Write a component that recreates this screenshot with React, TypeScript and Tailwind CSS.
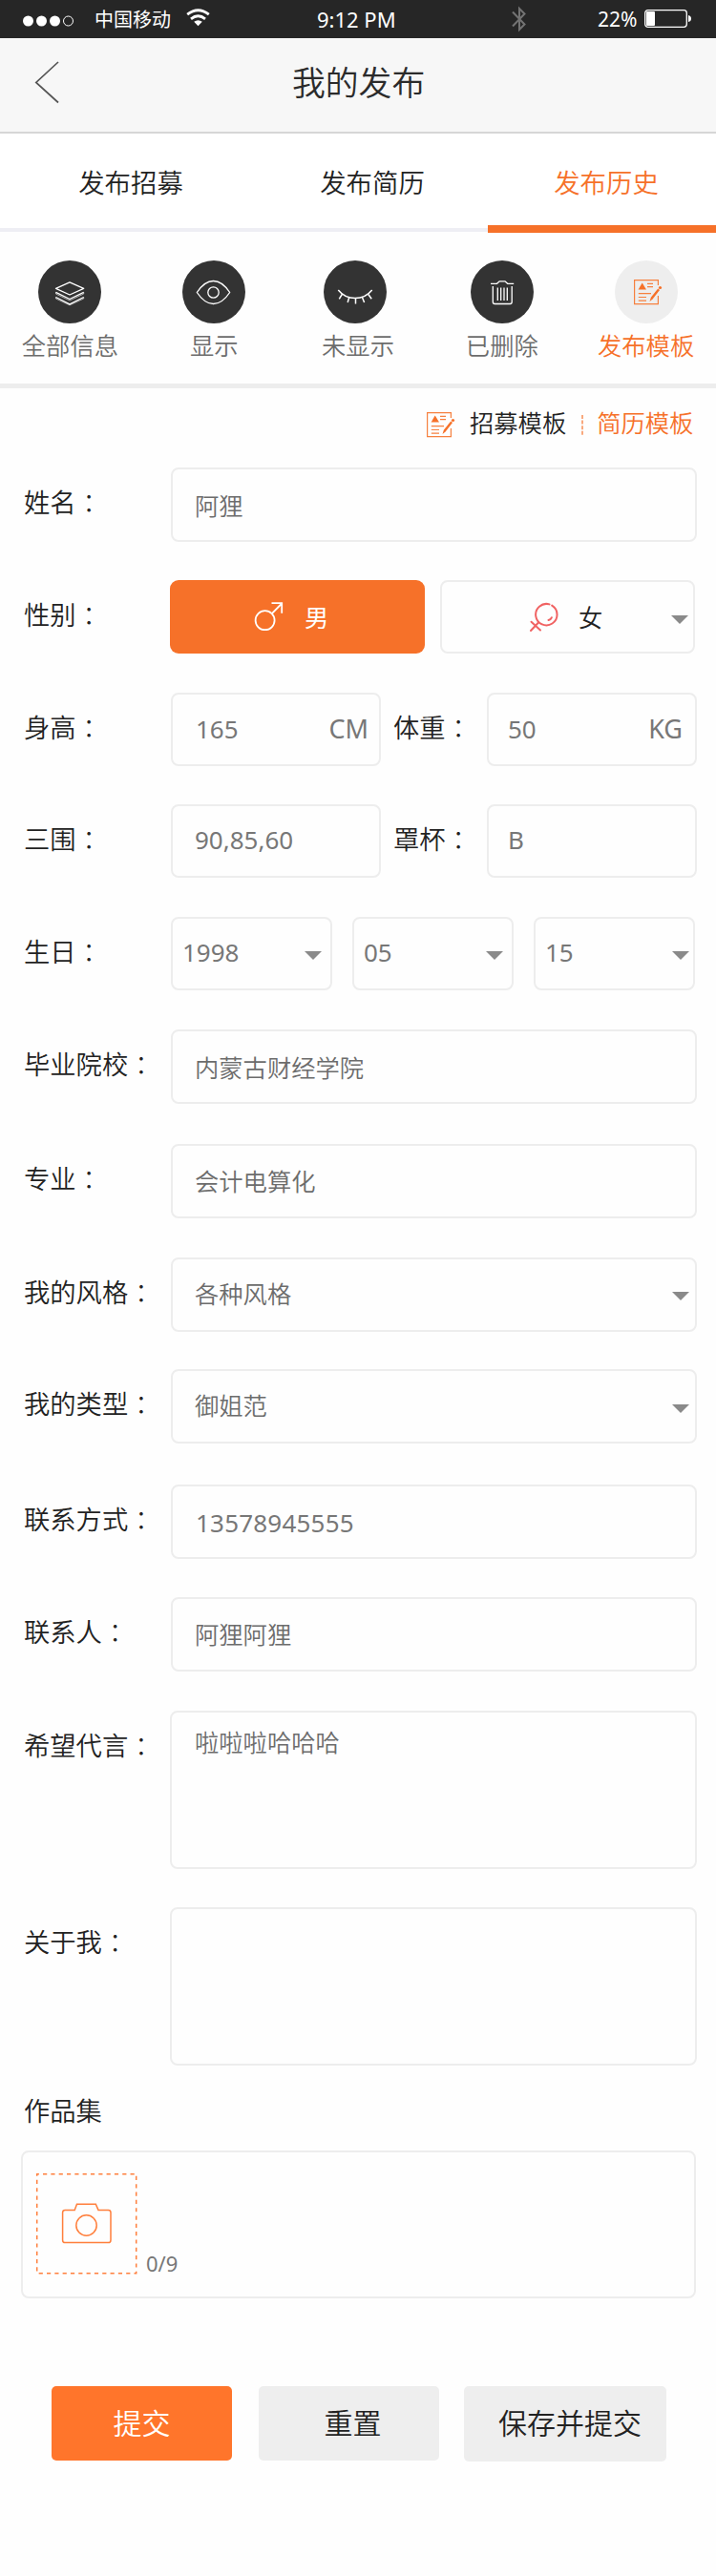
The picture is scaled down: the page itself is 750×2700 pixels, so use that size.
import type { ReactNode } from "react";

const CJK = "font-['Noto_Sans_CJK_SC',sans-serif]";
const LATIN = "font-['Noto_Sans','Noto_Sans_CJK_SC',sans-serif]";

function StatusBar() {
  return (
    <div className="flex h-10 items-center bg-[#262626] text-white">
      <svg className="ml-6 mt-1" width="54" height="12" viewBox="0 0 54 12">
        <circle cx="5.5" cy="6" r="5.5" fill="white" />
        <circle cx="19.5" cy="6" r="5.5" fill="white" />
        <circle cx="33.5" cy="6" r="5.5" fill="white" />
        <circle cx="47.5" cy="6" r="5" fill="none" stroke="white" />
      </svg>
      <span className={`ml-[21px] w-[80px] whitespace-nowrap text-[20px] leading-10 ${CJK}`}>中国移动</span>
      <svg className="ml-[16px] -mt-1" width="25" height="19" viewBox="0 0 25 19" fill="none" stroke="white" strokeWidth="2.8">
        <path d="M1.2 6.2Q12.5-2.8 23.8 6.2" />
        <path d="M5 10.8Q12.5 4.8 20 10.8" />
        <path d="M12.5 18.2L8.2 13.8Q12.5 10.6 16.8 13.8Z" fill="white" stroke="none" />
      </svg>
      <span className={`ml-[112px] w-[84px] whitespace-nowrap text-[22px] leading-10 ${LATIN}`}>9:12 PM</span>
      <svg className="ml-[120px]" width="16" height="28" viewBox="0 0 16 28" fill="none" stroke="#737373" strokeWidth="2">
        <path d="M1 6.5L13.5 19.5L8 25V3L13.5 8.5L1 21.5" />
      </svg>
      <span className={`ml-[74px] w-[44px] whitespace-nowrap text-[21px] leading-10 ${LATIN}`}>22%</span>
      <svg className="ml-[5px]" width="50" height="20" viewBox="0 0 50 20">
        <rect x="0.7" y="0.7" width="43.6" height="17.6" rx="3" fill="none" stroke="white" strokeWidth="1.3" />
        <rect x="2" y="2" width="9" height="15" rx="1" fill="white" />
        <path d="M46 6Q49 6.500 49 9.500Q49 12.500 46 13Z" fill="white" />
      </svg>
    </div>
  );
}

function LayersIcon() {
  return (
    <svg width="66" height="66" viewBox="41 273 66 66" fill="none" stroke="white" strokeWidth="1.3" strokeLinejoin="round">
      <path d="M59.500 302.300L74 295.800L88.700 302.300L74 309Z" />
      <path d="M59.500 306.300L74 313.500L88.700 306.300" />
      <path d="M59.500 306.300V308L74 315L88.700 308V306.300" strokeWidth="0.6" />
      <path d="M59.500 311.500L74 318.800L88.700 311.500" />
      <path d="M59.500 311.500V313L74 319.800L88.700 313V311.500" strokeWidth="0.6" />
    </svg>
  );
}

function EyeIcon() {
  return (
    <svg width="66" height="66" viewBox="191.500 273 66 66" fill="none" stroke="white" strokeWidth="1.300">
      <path d="M206.800 306.500C212.500 298 217.500 294.500 224 294.500S235.500 298 241.200 306.500C235.500 315 230.500 318.500 224 318.500S212.500 315 206.800 306.500Z" />
      <circle cx="224" cy="306.500" r="5.700" />
    </svg>
  );
}

function ClosedEyeIcon() {
  return (
    <svg width="66" height="66" viewBox="340 273 66 66" fill="none" stroke="white" strokeWidth="1.500">
      <path d="M355.300 304C360 309.800 366 312.600 373 312.600S386 309.800 390.700 304" />
      <path d="M359.600 308L356.300 313.300M366.800 311.300L365.200 317M373.500 312.600V318.500M380.400 311.500L382.600 317M386.800 308.500L390.200 313.300" />
    </svg>
  );
}

function TrashIcon() {
  return (
    <svg width="66" height="66" viewBox="491 273 66 66" fill="none" stroke="white" strokeWidth="1.300">
      <path d="M512 297.300H518.500L521.200 294.800H527L529.700 297.300H536.200" />
      <path d="M514.300 300V316.500Q514.300 318.500 516.300 318.500H532.200Q534.200 318.500 534.200 316.500V300" />
      <path d="M519.300 301.500V315M522.700 301.500V315M526 301.500V315M529.300 301.500V315" />
    </svg>
  );
}

function TemplateGlyph({ className }: { className?: string }) {
  return (
    <svg className={className} width="32" height="28" viewBox="663 292 32 28" fill="none" stroke="#f6803f" strokeWidth="1.200">
      <path d="M689.400 299V293.600H664.600V318.600H689.400V310" />
      <path d="M668.600 303.500L672.700 296.500L677 303.500Z" fill="#f67129" stroke="none" />
      <path d="M678 297.300H684M678 300.600H684M668.800 307.700H682M668.800 311.500H677M668.800 315.200H677" />
      <path d="M680.500 316L681.800 311.800L689.200 302.600L691 304L683.600 313.400Z" fill="#f67129" stroke="none" />
      <circle cx="691.500" cy="301.500" r="1.600" fill="#f67129" stroke="none" />
    </svg>
  );
}

function CategoryItem({ label, active, shift, children }: { label: string; active?: boolean; shift?: boolean; children: ReactNode }) {
  return (
    <div className="flex flex-col items-center">
      <div className={`flex size-[66px] items-center justify-center rounded-full ${active ? "bg-[#eeeeee]" : "bg-[#333333]"} ${shift ? "mr-[5px]" : ""}`}>
        {children}
      </div>
      <span className={`mt-[6px] whitespace-nowrap text-[25.3px] leading-[32px] font-[350] ${active ? "text-[#f67129]" : "text-[#6c6c6c]"} ${CJK}`}>{label}</span>
    </div>
  );
}

function Caret({ className }: { className?: string }) {
  return (
    <svg className={`shrink-0 ${className ?? ""}`} width="18" height="9" viewBox="0 0 18 9">
      <path d="M0 0H18L9 9Z" fill="#8a8a8a" />
    </svg>
  );
}

function Label({ text, colon = true, className = "w-[154px]" }: { text: string; colon?: boolean; className?: string }) {
  return (
    <div className={`h-[74px] shrink-0 whitespace-nowrap text-[27.3px] leading-[71px] font-[350] text-[#222222] ${CJK}`}>
      <div className={className}>
        {text}
        {colon && <span className="align-[-1px] font-['Noto_Sans_CJK_TC',sans-serif] leading-none font-light" lang="zh-TW">：</span>}
      </div>
    </div>
  );
}

function Box({ className, children }: { className: string; children?: ReactNode }) {
  return <div className={`flex shrink-0 items-start rounded-[8px] border-2 border-[#ededed] text-[#777777] ${className}`}>{children}</div>;
}

function Cn({ children, className = "ml-[23px] mt-[18px]" }: { children: ReactNode; className?: string }) {
  return <span className={`text-[25.3px] leading-[38px] font-[350] text-[#6c6c6c] ${CJK} ${className}`}>{children}</span>;
}

function Num({ children, className = "ml-[23px] mt-[17px] text-[26px]" }: { children: ReactNode; className?: string }) {
  return <span className={`leading-[38px] ${LATIN} ${className}`}>{children}</span>;
}

function Row({ label, className, children }: { label: string; className: string; children: ReactNode }) {
  return (
    <div className={`flex items-start pl-[25px] ${className}`}>
      <Label text={label} />
      {children}
    </div>
  );
}

export default function App() {
  return (
    <div className="flex h-[2700px] w-[750px] flex-col overflow-hidden bg-[#fefefe]">
      <StatusBar />

      <header className="flex h-[100px] border-b-2 border-[#d6d6d6] bg-[#f7f7f7]">
        <svg className="ml-9 mt-6 shrink-0" width="27" height="45" viewBox="36 64 27 45" fill="none" stroke="#555555" strokeWidth="1.700">
          <path d="M61 65L37.800 86.500L61 107.500" />
        </svg>
        <h1 className={`ml-[243px] whitespace-nowrap text-[34.800px] leading-[90px] font-[350] text-[#2b2b2b] ${CJK}`}>我的发布</h1>
      </header>

      <nav className={`flex h-[104px] bg-white text-[27.400px] leading-[100px] font-[350] text-[#222222] ${CJK}`}>
        <div className="h-[103px] w-[274px] border-b-4 border-[#eeeef4] text-center">发布招募</div>
        <div className="h-[103px] w-[237px] border-b-4 border-[#eeeef4] pr-[5px] text-center">发布简历</div>
        <div className="h-[104px] w-[239px] border-b-8 border-[#f67129] pl-[9px] text-center text-[#f67129]">发布历史</div>
      </nav>

      <div className="-mx-0.5 grid h-[163px] grid-cols-5 border-b-[5px] border-[#ededed] pt-[29px]">
        <CategoryItem label="全部信息"><LayersIcon /></CategoryItem>
        <CategoryItem label="显示"><EyeIcon /></CategoryItem>
        <CategoryItem label="未显示" shift><ClosedEyeIcon /></CategoryItem>
        <CategoryItem label="已删除"><TrashIcon /></CategoryItem>
        <CategoryItem label="发布模板" active><TemplateGlyph className="ml-1" /></CategoryItem>
      </div>

      <div className={`flex h-[83px] items-start pl-[446px] text-[25.300px] leading-[36px] font-[350] whitespace-nowrap ${CJK}`}>
        <TemplateGlyph className="mt-6 shrink-0" />
        <span className="ml-[14px] mt-[17px] text-[#222222]">招募模板</span>
        <svg className="ml-[16px] mt-7 shrink-0" width="2" height="21" viewBox="0 0 2 21">
          <path d="M1 0V21" stroke="#f67129" strokeWidth="1.200" strokeDasharray="4 1.600" />
        </svg>
        <span className="ml-[14px] mt-[17px] text-[#f67129]">简历模板</span>
      </div>

      <Row label="姓名" className="h-[118px]">
        <Box className="h-[78px] w-[551px]"><Cn className="ml-[23px] mt-[18px]">阿狸</Cn></Box>
      </Row>

      <Row label="性别" className="h-[118px]">
        <div className={`-ml-px flex h-[77px] w-[267px] shrink-0 items-start rounded-[9px] bg-[#f67129] text-[25.300px] leading-[38px] text-white ${CJK}`}>
          <svg className="ml-[87px] mt-[22px]" width="33" height="33" viewBox="265 630 33 33" fill="none" stroke="white" strokeWidth="1.800">
            <circle cx="277.600" cy="650.200" r="10" />
            <path d="M284.800 643.200L295.200 632.500M284.500 632.200H295.200V642.800" />
          </svg>
          <span className="ml-[21px] mt-[19px]">男</span>
        </div>
        <Box className="ml-4 h-[77px] w-[267px]">
          <svg className="ml-[91px] mt-[21px]" width="33" height="33" viewBox="554 631 33 33" fill="none" stroke="#f06262" strokeWidth="2" strokeLinecap="round">
            <path d="M575.500 633.400A11.200 11.200 0 1 0 578.200 634.600M574.500 650Q577 649.300 577.800 647.300" />
            <path d="M564 652.500L556 661M556.500 651.800L566 660.500" />
          </svg>
          <span className={`ml-[19px] mt-[17px] text-[25.300px] leading-[38px] font-[350] text-[#222222] ${CJK}`}>女</span>
          <Caret className="ml-auto mr-[5px] mt-[35px]" />
        </Box>
      </Row>

      <Row label="身高" className="h-[117px]">
        <Box className="h-[77px] w-[220px]">
          <Num className="ml-[24px] mt-[17px] text-[26px]">165</Num>
          <Num className="ml-auto mr-[11px] mt-[17px] text-[27px]">CM</Num>
        </Box>
        <Label text="体重" className="ml-[13px] w-[98px]" />
        <Box className="h-[77px] w-[220px]">
          <Num className="ml-[20px] mt-[17px] text-[26px]">50</Num>
          <Num className="ml-auto mr-[13px] mt-[17px] text-[27px]">KG</Num>
        </Box>
      </Row>

      <Row label="三围" className="h-[118px]">
        <Box className="h-[77px] w-[220px]"><Num className="ml-[23px] mt-[16px] text-[26px]">90,85,60</Num></Box>
        <Label text="罩杯" className="ml-[13px] w-[98px]" />
        <Box className="h-[77px] w-[220px]"><Num className="ml-[20px] mt-[16px] text-[26px]">B</Num></Box>
      </Row>

      <Row label="生日" className="h-[118px]">
        <Box className="h-[77px] w-[169px]">
          <Num className="ml-[10px] mt-[16px] text-[26px]">1998</Num>
          <Caret className="ml-auto mr-[9px] mt-[34px]" />
        </Box>
        <Box className="ml-[21px] h-[77px] w-[169px]">
          <Num className="ml-[10px] mt-[16px] text-[26px]">05</Num>
          <Caret className="ml-auto mr-[9px] mt-[34px]" />
        </Box>
        <Box className="ml-[21px] h-[77px] w-[169px]">
          <Num className="ml-[10px] mt-[16px] text-[26px]">15</Num>
          <Caret className="ml-auto mr-[4px] mt-[34px]" />
        </Box>
      </Row>

      <Row label="毕业院校" className="h-[120px]">
        <Box className="h-[78px] w-[551px]"><Cn className="ml-[23px] mt-[18px]">内蒙古财经学院</Cn></Box>
      </Row>
      <Row label="专业" className="h-[119px]">
        <Box className="h-[78px] w-[551px]"><Cn className="ml-[23px] mt-[17px]">会计电算化</Cn></Box>
      </Row>
      <Row label="我的风格" className="h-[117px]">
        <Box className="h-[78px] w-[551px]">
          <Cn className="ml-[23px] mt-[16px]">各种风格</Cn>
          <Caret className="ml-auto mr-[6px] mt-[34px]" />
        </Box>
      </Row>
      <Row label="我的类型" className="h-[121px]">
        <Box className="h-[78px] w-[551px]">
          <Cn className="ml-[23px] mt-[16px]">御姐范</Cn>
          <Caret className="ml-auto mr-[6px] mt-[35px]" />
        </Box>
      </Row>
      <Row label="联系方式" className="h-[118px]">
        <Box className="h-[78px] w-[551px]"><Num className="ml-[24px] mt-[19px] text-[26px] tracking-[0.200px]">13578945555</Num></Box>
      </Row>
      <Row label="联系人" className="h-[119px]">
        <Box className="h-[78px] w-[551px]"><Cn className="ml-[23px] mt-[17px]">阿狸阿狸</Cn></Box>
      </Row>
      <Row label="希望代言" className="h-[206px]">
        <Box className="-ml-px h-[166px] w-[552px]"><Cn className="ml-[24px] mt-[11px]">啦啦啦哈哈哈</Cn></Box>
      </Row>
      <Row label="关于我" className="h-[177px]">
        <Box className="-ml-px h-[166px] w-[552px]" />
      </Row>

      <div className="flex h-[78px] pl-[25px]">
        <Label text="作品集" colon={false} />
      </div>
      <Box className="ml-[22px] h-[155px] w-[707px]">
        <svg className="ml-[13px] mt-[21px] shrink-0" width="107" height="107" viewBox="37 2277 107 107" fill="none" stroke="#ff7f3c" strokeWidth="1.500">
          <rect x="38.700" y="2278.700" width="104" height="104" strokeDasharray="4.200 4.120" strokeDashoffset="2" />
          <path d="M80.500 2310.200H100.300L103 2316.400H113.500Q116 2316.400 116 2319V2348Q116 2350.600 113.500 2350.600H68.200Q65.600 2350.600 65.600 2348V2319Q65.600 2316.400 68.200 2316.400H78.200Z" />
          <circle cx="90.500" cy="2332.500" r="10.700" />
        </svg>
        <span className={`ml-[9px] mt-[101px] text-[22px] leading-[30px] ${LATIN}`}>0/9</span>
      </Box>

      <div className={`mt-[92px] flex pl-[54px] text-center text-[30px] leading-[75px] font-[350] whitespace-nowrap text-[#222222] ${CJK}`}>
        <button className="h-[78px] w-[189px] rounded-[5px] bg-[#ff752b] pb-[3px] text-white">提交</button>
        <button className="ml-[28px] h-[78px] w-[189px] rounded-[5px] bg-[#eeeeee] pb-[3px] pl-[8px]">重置</button>
        <button className="ml-[26px] h-[79px] w-[212px] rounded-[5px] bg-[#eeeeee] pb-[4px] pl-[10px]">保存并提交</button>
      </div>
    </div>
  );
}
